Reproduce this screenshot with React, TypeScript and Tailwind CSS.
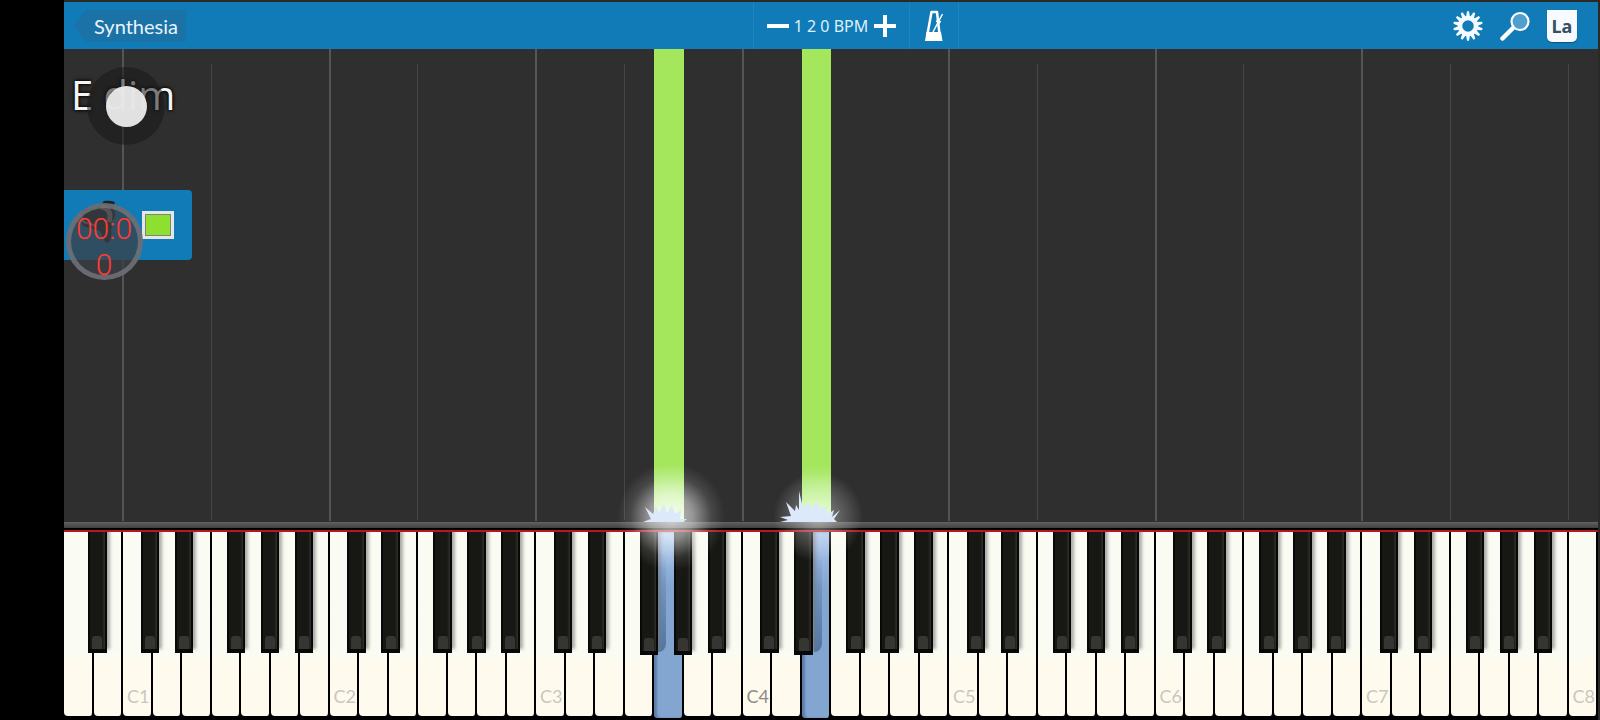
import clsx from "clsx";

type WhiteKey = {
    note: string;
    octave: number;
    pressed: boolean;
};

const noteNames = ["A", "B", "C", "D", "E", "F", "G"];
const pressedNotes = ["G3", "E4"];

// Sharps next to a held key sit slightly lower
const loweredSharps = ["F3", "G3", "D4"];

// 88-key piano: 52 white keys from A0 to C8
const whiteKeys: WhiteKey[] = Array.from({ length: 52 }, (_, i) => {
    const note = noteNames[i % 7];
    const octave = Math.floor((i + 5) / 7);
    return { note, octave, pressed: pressedNotes.includes(`${note}${octave}`) };
});

// Where the sharp of each note sits over the white key
const sharpOffset: Record<string, string> = {
    A: "left-[82%]",
    C: "left-[60%]",
    D: "left-[76%]",
    F: "left-[52%]",
    G: "left-[67%]",
};

const gearTeeth = Array.from({ length: 14 }, (_, i) => (i * 360) / 14);

const GearIcon = () => (
    <svg viewBox="0 0 30 30" className="h-[30px] w-[30px]" fill="none" stroke="#f4faff">
        <circle cx="15" cy="15" r="8" strokeWidth="4.500" />
        {gearTeeth.map((angle) => (
            <path key={angle} d="M13 6 L14 0.300 H16 L17 6 Z" fill="#f4faff" stroke="none" transform={`rotate(${angle} 15 15)`} />
        ))}
    </svg>
);

const SearchIcon = () => (
    <svg viewBox="0 0 30 30" className="h-[30px] w-[30px]">
        <path d="M2.500 27.500 L13 17" stroke="#fff" strokeWidth="4.500" strokeLinecap="round" />
        <circle cx="20" cy="10.500" r="8.500" fill="#4fa0cf" stroke="#fff" strokeWidth="2.200" />
    </svg>
);

const MetronomeIcon = () => (
    <svg viewBox="0 0 20 32" className="h-8 w-5" fill="none" stroke="#fff">
        <path d="M7.500 2 H13 L15.500 24 H3.500 Z" strokeWidth="2.500" strokeLinejoin="round" />
        <path d="M2.500 22 H17 L18.500 31 H1 Z" fill="#fff" stroke="none" />
        <path d="M9 22 L18.500 4" strokeWidth="1.500" />
        <path d="M12.500 10.500 L16.500 12.500" strokeWidth="3" />
    </svg>
);

const HandIcon = () => (
    <svg viewBox="0 0 48 50" className="h-[50px] w-12" fill="#1f2123">
        <path d="M27 1 Q33 0 38 2 L36 7 Q41 15 35 21 L34 38 Q31 47 27 40 L23 31 L6 26 Q2 21 8 20 L5 15 Q3 9 10 9 L23 6 Z" />
        <path d="M24 7 Q36 9 32 22" stroke="#a08a78" strokeWidth="5" fill="none" />
        <path d="M5 17 Q4 23 11 23 L19 26" stroke="#8d9398" strokeWidth="2" fill="none" />
    </svg>
);

const Header = () => (
    <header className="grid h-[47px] grid-cols-[1fr_auto_1fr] bg-[#117bb7] text-white">
        <div className="flex items-center pl-[10px]">
            <button className="h-8 bg-[#1a72a6] pr-2 pl-5 text-xl text-[#e9f4fb] [clip-path:polygon(0_50%,12px_0,100%_0,100%_100%,12px_100%)]">
                Synthesia
            </button>
        </div>
        <div className="flex w-[157px] items-center justify-center gap-[5px] border-x border-[#1d84bf]">
            <button aria-label="Slower" className="flex h-8 w-[22px] items-center justify-center">
                <span className="h-1 w-full bg-white" />
            </button>
            <span className="w-[75px] text-center font-['Noto_Sans'] text-base whitespace-nowrap text-[#dff0fb]">1 2 0 BPM</span>
            <button aria-label="Faster">
                <svg viewBox="0 0 22 22" className="h-[22px] w-[22px]" stroke="#fff" strokeWidth="4">
                    <path d="M0 11 H22 M11 0 V22" />
                </svg>
            </button>
        </div>
        <div className="flex items-center justify-between">
            <button aria-label="Metronome" className="flex h-full w-[49px] items-center justify-center border-r border-[#1d84bf]">
                <MetronomeIcon />
            </button>
            <div className="flex items-center gap-[17px] pr-[21px]">
                <button aria-label="Settings">
                    <GearIcon />
                </button>
                <button aria-label="Search">
                    <SearchIcon />
                </button>
                <button
                    aria-label="Note labels"
                    className="h-8 w-[30px] rounded-b-[5px] bg-[#f7fbff] font-['Noto_Sans'] text-lg leading-6 font-bold text-[#33515f] shadow-[0_1px_1px_#0b5480]"
                >
                    La
                </button>
            </div>
        </div>
    </header>
);

const Spark = ({ large }: { large: boolean }) => (
    <div className="pointer-events-none absolute bottom-0 left-1/2 z-10">
        <svg viewBox="-80 -80 160 160" className="absolute -top-20 -left-20 h-40 w-40 max-w-none">
            <defs>
                <radialGradient id={large ? "glow-large" : "glow-small"}>
                    <stop offset="0" stopColor="#fff" stopOpacity={large ? 0.5 : 0.72} />
                    <stop offset="0.4" stopColor="#fff" stopOpacity={large ? 0.28 : 0.5} />
                    <stop offset="0.75" stopColor="#fff" stopOpacity="0.12" />
                    <stop offset="1" stopColor="#fff" stopOpacity="0" />
                </radialGradient>
            </defs>
            <circle cx="2" cy="-5" r={large ? 45 : 54} fill={large ? "url(#glow-large)" : "url(#glow-small)"} />
            <path
                fill="#dce9fb"
                d={
                    large
                        ? "M-36 0 L-28 -2 L-36 -5 L-25 -6 L-30 -20 L-21 -11 L-20 -17 L-17 -12 L-17 -31 L-13 -14 L-8 -20 L-5 -14 L2 -20 L4 -13 L10 -15 L12 -8 L18 -12 L16 -5 L24 -12 L18 -3 L21 0 Z"
                        : "M-26 0 L-18 -3 L-24 -15 L-16 -8 L-13 -16 L-10 -9 L-5 -18 L-2 -9 L3 -17 L6 -8 L12 -12 L11 -3 L18 -3 L14 0 Z"
                }
            />
        </svg>
    </div>
);

const NoteLanes = () => (
    <div className="flex [grid-area:1/1]">
        {whiteKeys.map(({ note, octave, pressed }, i) => (
            <div key={`${note}${octave}`} className="relative flex flex-1">
                {note === "C" && octave < 8 && <div className="mb-px -ml-px w-[2px] bg-[#555555]" />}
                {/* A sounding note covers the guide line on its right */}
                {((note === "F" && !whiteKeys[i - 1].pressed) || octave === 8) && (
                    <div className="mt-[15px] mb-[2px] -ml-px w-px bg-[#464646]" />
                )}
                {pressed && (
                    <>
                        <div className="flex-1 bg-linear-to-b from-[#a4e65c] from-88% to-[#d8fbbb]" />
                        <Spark large={note === "E"} />
                    </>
                )}
            </div>
        ))}
    </div>
);

const ChordAndTimer = () => (
    <div className="flex flex-col items-start [grid-area:1/1]">
        <div className="relative mt-[14px] ml-[7px] flex h-[84px] w-[108px] items-start">
            <p className="pt-2 font-['Open_Sans'] text-[40px] leading-[48px] whitespace-pre text-[#f4f4f4] [text-shadow:0_0_4px_#000,0_0_3px_#000]">
                E dim
            </p>
            <div className="absolute top-1 left-4 flex h-[78px] w-[78px] items-center justify-center rounded-full bg-[#181818]/55">
                <div className="h-[41px] w-[41px] rounded-full bg-[#ececec]/95" />
            </div>
        </div>
        <div className="relative mt-[43px] flex h-[70px] w-32 items-start justify-between rounded-r-[4px] bg-[#117bb7] pt-[10px] pr-[18px] pl-[13px]">
            <HandIcon />
            <button aria-label="Track color" className="mt-[11px] h-7 w-8 border-[3px] border-[#e6e6e6] bg-[#8ee030] shadow-[inset_0_0_0_1px_#7b8678]" />
            <div className="absolute top-[13px] left-[2px] h-[77px] w-[77px] rounded-full border-[5px] border-[#77777c]/80 bg-[#3b3f44]/75" />
            <p className="absolute top-[21px] left-[8px] w-16 text-center font-[Roboto] text-[30px] leading-9 font-light text-[#ff3b35]">
                00:0
                <br />0
            </p>
        </div>
    </div>
);

const Keyboard = () => (
    <section aria-label="Piano keyboard" className="flex h-[188px] overflow-hidden bg-black">
        {whiteKeys.map(({ note, octave, pressed }) => (
            <div key={`${note}${octave}`} className="relative flex-1">
                <button
                    aria-label={`${note}${octave}`}
                    className={clsx(
                        "flex w-full items-end overflow-hidden rounded-b-[4px] border-r-2 border-black pb-2 pl-1 text-lg leading-6",
                        pressed
                            ? "h-[186px] bg-linear-to-b from-[#a9c5ed] to-[#83a6d1] to-30% shadow-[inset_3px_0_2px_#5c7faa]"
                            : "h-[184px] bg-linear-to-b from-[#fafcf3] from-65% to-[#fffaee] to-72%",
                        note === "C" && octave === 4 ? "text-[#8f8b84]" : "text-[#cac7bf]",
                    )}
                >
                    {note === "C" && `C${octave}`}
                </button>
                {sharpOffset[note] && octave < 8 && (
                    <button
                        aria-label={`${note}#${octave}`}
                        className={clsx(
                            "absolute top-0 z-[1] flex w-[63%] flex-col justify-end border-x-2 border-b-4 border-[#080808] bg-linear-to-r from-[#171814] from-80% to-[#30312a] shadow-[3px_-4px_3px_#77777799]",
                            loweredSharps.includes(`${note}${octave}`) ? "h-[123px]" : "h-[121px]",
                            sharpOffset[note],
                        )}
                    >
                        <span className="mx-auto h-[13px] w-[10px] rounded-t-[3px] bg-[#353632]" />
                    </button>
                )}
                {/* Shadow of the raised sharp on a key that is held down */}
                {pressed && (
                    <div
                        className={clsx(
                            "absolute top-5 h-[100px] w-2 rounded-br-lg bg-linear-to-b from-transparent to-[#466a99]/80",
                            note === "E" ? "left-3" : "left-1",
                        )}
                    />
                )}
            </div>
        ))}
    </section>
);

const App = () => {
    return (
        <div className="flex min-h-screen bg-black pl-16 font-[Lato,sans-serif]">
            <main className="flex min-w-0 flex-1 flex-col bg-[#292925] pt-[2px] pr-[2px]">
                <Header />
                <section aria-label="Falling notes" className="grid min-h-[473px] flex-1 bg-[#2f2f2f]">
                    <NoteLanes />
                    <ChordAndTimer />
                </section>
                <div className="h-[8px] border-b-2 border-black bg-linear-to-b from-[#626262] to-[#404040]" />
                <div className="h-[2px] bg-[#b21a20]" />
                <Keyboard />
            </main>
        </div>
    );
};

export default App;
